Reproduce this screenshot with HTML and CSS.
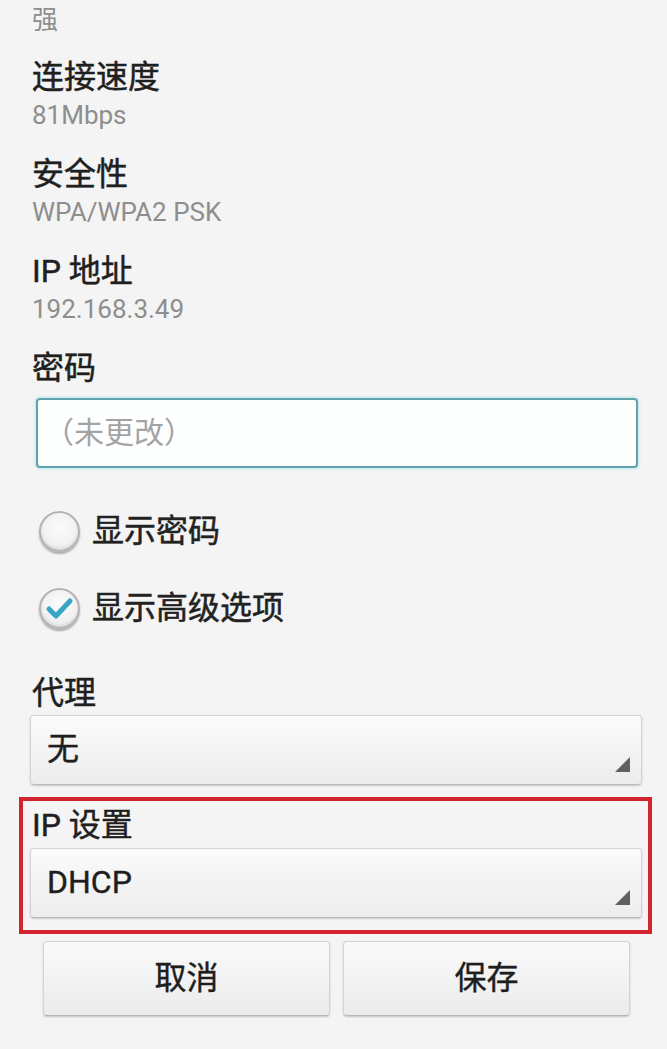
FILE: index.html
```html
<!DOCTYPE html>
<html lang="zh-CN">
<head>
<meta charset="utf-8">
<title>WLAN 设置</title>
<link rel="stylesheet" href="styles.css">
</head>
<body>
<div class="screen">
  <div class="field first">
    <div class="value">强</div>
  </div>
  <div class="field">
    <div class="label">连接速度</div>
    <div class="value">81Mbps</div>
  </div>
  <div class="field">
    <div class="label">安全性</div>
    <div class="value">WPA/WPA2 PSK</div>
  </div>
  <div class="field">
    <div class="label">IP 地址</div>
    <div class="value">192.168.3.49</div>
  </div>
  <div class="label">密码</div>
  <div class="input">（未更改）</div>

  <div class="check check-first">
    <span class="radio"></span>
    <span class="check-text">显示密码</span>
  </div>
  <div class="check check-second">
    <span class="radio">
      <svg class="tick" viewBox="0 0 40 40" width="40" height="40">
        <path d="M10 21 L17 28 L31 13" fill="none" stroke="#36a6c4" stroke-width="5" stroke-linecap="round" stroke-linejoin="round"/>
      </svg>
    </span>
    <span class="check-text">显示高级选项</span>
  </div>

  <div class="label proxy-label">代理</div>
  <div class="select proxy-select">无<span class="tri"></span></div>

  <div class="highlight">
    <div class="label ip-label">IP 设置</div>
    <div class="select ip-select">DHCP<span class="tri"></span></div>
  </div>

  <div class="buttons">
    <div class="btn">取消</div>
    <div class="btn">保存</div>
  </div>
</div>
</body>
</html>
```

FILE: styles.css
```css
html, body {
  margin: 0;
  padding: 0;
  background: #f4f4f4;
}

body {
  width: 667px;
  height: 1049px;
  overflow: hidden;
  font-family: Roboto, "Noto Sans CJK SC", sans-serif;
  color: #202020;
}

.screen {
  padding: 4px 25px 0 30px;
}

.field {
  margin-bottom: 23px;
}

.field.first {
  margin-bottom: 21px;
}

.label {
  font-size: 32px;
  line-height: 40px;
  padding-left: 2px;
  color: #1f1f1f;
  -webkit-text-stroke: 0.5px #1f1f1f;
}

.value {
  font-size: 26px;
  line-height: 32px;
  margin-top: 2px;
  padding-left: 2px;
  color: #8e8e8e;
}

.field.first .value {
  margin-top: 0;
}

.input {
  margin: 10px 4px 0 6px;
  height: 66px;
  box-sizing: content-box;
  border: 2px solid #5fa2ac;
  border-radius: 4px;
  background: #fdfefe;
  box-shadow: 0 0 3px 1px rgba(150, 220, 235, 0.55);
  font-size: 30px;
  line-height: 66px;
  padding-left: 6px;
  color: #a3a3a3;
}

.check {
  display: flex;
  align-items: center;
  gap: 12px;
  height: 40px;
  padding-left: 9px;
}

.check-first {
  margin-top: 43px;
}

.check-second {
  margin-top: 37px;
}

.radio {
  position: relative;
  flex: none;
  width: 37px;
  height: 37px;
  border-radius: 50%;
  border: 2px solid #b3b3b3;
  background: radial-gradient(circle at 50% 40%, #fbfbfb 0%, #f1f1f1 60%, #e0e0e0 100%);
  box-shadow: 0 2px 2px rgba(0, 0, 0, 0.3), inset 0 -2px 3px rgba(0, 0, 0, 0.08);
}

.tick {
  position: absolute;
  left: -2px;
  top: -2px;
}

.check-text {
  font-size: 32px;
  line-height: 40px;
  color: #222;
  -webkit-text-stroke: 0.5px #222;
}

.proxy-label {
  margin-top: 45px;
}

.select {
  position: relative;
  height: 68px;
  border: 1px solid #d4d4d4;
  border-bottom-color: #b9b9b9;
  border-radius: 4px;
  background: linear-gradient(#fbfbfb, #ececec);
  box-shadow: 0 1px 2px rgba(0, 0, 0, 0.18);
  font-size: 32px;
  line-height: 66px;
  padding-left: 16px;
  color: #1e1e1e;
  -webkit-text-stroke: 0.4px #1e1e1e;
}

.proxy-select {
  margin-top: 2px;
}

.tri {
  position: absolute;
  right: 11px;
  bottom: 12px;
  width: 0;
  height: 0;
  border-style: solid;
  border-width: 0 0 15px 15px;
  border-color: transparent transparent #606060 transparent;
}

.highlight {
  margin: 12px -10px 0 -11px;
  border: 4px solid #d2232f;
  padding: 4px 6px 12px 7px;
}

.ip-select {
  margin-top: 3px;
}

.buttons {
  display: flex;
  gap: 13px;
  margin: 7px 12px 0 13px;
}

.btn {
  flex: 1;
  height: 73px;
  border: 1px solid #d4d4d4;
  border-bottom-color: #b5b5b5;
  border-radius: 4px;
  background: linear-gradient(#fafafa, #ebebeb);
  box-shadow: 0 1px 2px rgba(0, 0, 0, 0.2);
  font-size: 32px;
  line-height: 72px;
  text-align: center;
  color: #1e1e1e;
  -webkit-text-stroke: 0.4px #1e1e1e;
}
```
